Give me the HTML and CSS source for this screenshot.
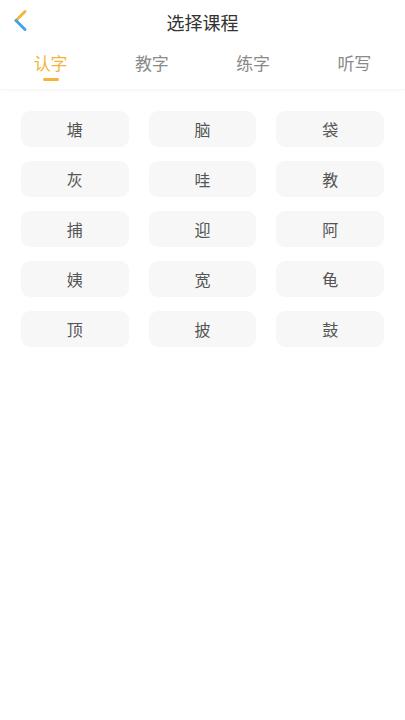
FILE: index.html
```html
<!DOCTYPE html>
<html lang="zh-CN">
<head>
<meta charset="utf-8">
<title>选择课程</title>
<link rel="stylesheet" href="styles.css">
</head>
<body>
<div class="top">
  <header class="header">
    <div class="back">
      <svg width="16" height="24" viewBox="0 0 16 24">
        <line x1="12" y1="2.5" x2="3" y2="11.5" stroke="#f3b43b" stroke-width="2.8" stroke-linecap="round"/>
        <line x1="3" y1="11.5" x2="12" y2="20.5" stroke="#45a3ea" stroke-width="3" stroke-linecap="round"/>
      </svg>
    </div>
    <h1 class="title">选择课程</h1>
    <div class="spacer"></div>
  </header>
  <nav class="tabs">
    <div class="tab active"><span class="tab-text">认字</span><span class="bar"></span></div>
    <div class="tab"><span class="tab-text">教字</span><span class="bar"></span></div>
    <div class="tab"><span class="tab-text">练字</span><span class="bar"></span></div>
    <div class="tab"><span class="tab-text">听写</span><span class="bar"></span></div>
  </nav>
</div>
<main class="grid">
  <div class="item">塘</div>
  <div class="item">脑</div>
  <div class="item">袋</div>
  <div class="item">灰</div>
  <div class="item">哇</div>
  <div class="item">教</div>
  <div class="item">捕</div>
  <div class="item">迎</div>
  <div class="item">阿</div>
  <div class="item">姨</div>
  <div class="item">宽</div>
  <div class="item">龟</div>
  <div class="item">顶</div>
  <div class="item">披</div>
  <div class="item">鼓</div>
</main>
</body>
</html>
```
FILE: styles.css
```css
html, body {
  margin: 0;
  padding: 0;
  background: #ffffff;
}
body {
  font-family: "Noto Sans CJK SC", "Noto Sans", sans-serif;
  width: 405px;
}
.top {
  background: #fff;
  box-shadow: 0 1px 3px rgba(0, 0, 0, 0.035);
  border-bottom: 1px solid #f7f7f7;
  height: 89px;
}
.header {
  height: 45px;
  display: grid;
  grid-template-columns: 60px 1fr 60px;
  align-items: center;
}
.back {
  padding-left: 13px;
  display: flex;
  align-items: center;
  height: 45px;
}
.back svg {
  display: block;
  margin-top: -3px;
}
.title {
  margin: 0;
  text-align: center;
  font-size: 18px;
  font-weight: 400;
  color: #333333;
  line-height: 24px;
  margin-top: -1px;
}
.tabs {
  display: flex;
  height: 44px;
}
.tab {
  flex: 1;
  display: flex;
  flex-direction: column;
  align-items: center;
  padding-top: 8px;
}
.tab-text {
  font-size: 17px;
  line-height: 20px;
  color: #8a8a8a;
}
.bar {
  display: block;
  width: 16px;
  height: 3px;
  margin-top: 5px;
  border-radius: 2px;
  background: transparent;
}
.tab.active .tab-text {
  color: #f4b43c;
}
.tab.active .bar {
  background: #f4b43c;
}
.grid {
  display: grid;
  grid-template-columns: repeat(3, 1fr);
  column-gap: 20px;
  row-gap: 14px;
  padding: 21px 21px 0 21px;
}
.item {
  height: 36px;
  border-radius: 9px;
  background: #f7f7f7;
  color: #555555;
  font-size: 16px;
  display: flex;
  align-items: center;
  justify-content: center;
}
```
